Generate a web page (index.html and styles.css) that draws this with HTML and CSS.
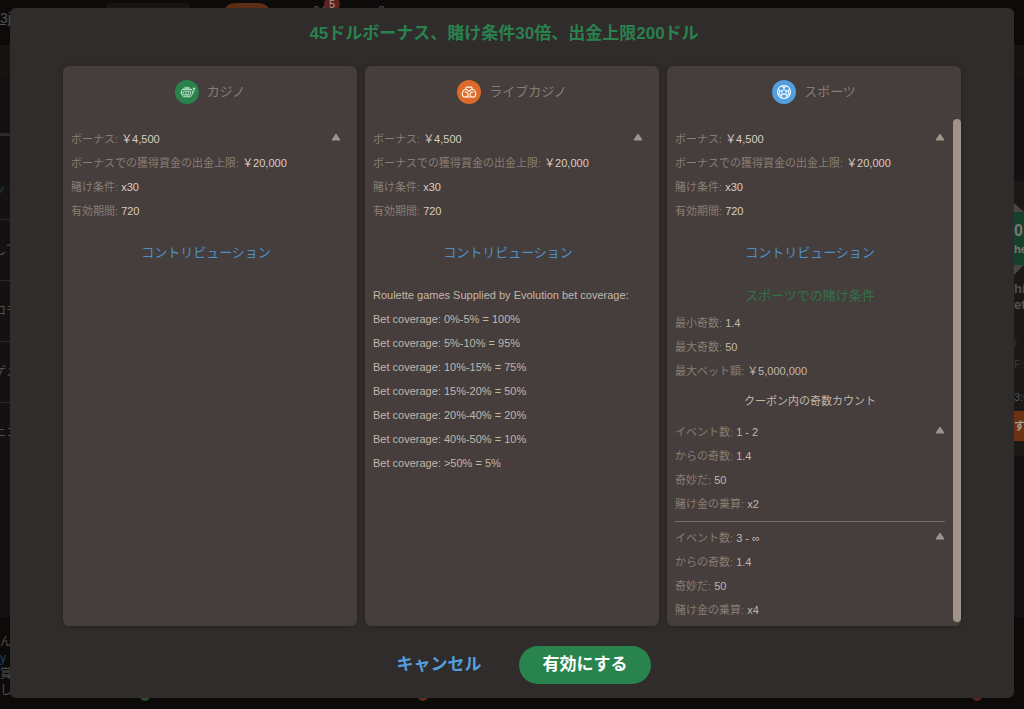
FILE: index.html
```html
<!DOCTYPE html>
<html lang="ja">
<head>
<meta charset="utf-8">
<meta name="viewport" content="width=device-width, initial-scale=1">
<title>ボーナス</title>
<link rel="stylesheet" href="styles.css">
</head>
<body>
<div class="page" aria-hidden="true">
  <div class="topbar">
    <span class="user">3j</span>
    <span class="balance"></span>
    <span class="deposit"></span>
    <span class="clock">04<span class="badge">5</span></span>
    <span class="lang">a</span>
  </div>
  <div class="band"></div>
  <div class="main">
    <ul class="side">
      <li class="current">ット</li>
      <li>して</li>
      <li>ロモ</li>
      <li>ゲメ</li>
      <li>ニコ</li>
    </ul>
    <div class="promo">
      <div class="promo-ribbon"><b>0</b><span>he</span></div>
      <div class="promo-name">hi<br>et</div>
      <div class="promo-line">i:</div>
      <div class="promo-line">F:</div>
      <div class="promo-time">3:0</div>
      <div class="promo-action">す</div>
    </div>
  </div>
  <div class="foot">
    <div class="foot-text">ん<br><span class="foot-link">y</span><br>賞<br>し</div>
    <div class="dots"><i class="dot dot-green"></i><i class="dot dot-orange"></i><i class="dot dot-red"></i></div>
  </div>
</div>

<div class="modal" role="dialog" aria-modal="true" aria-labelledby="title">
  <h1 class="title" id="title">45ドルボーナス、賭け条件30倍、出金上限200ドル</h1>

  <div class="cards">
    <section class="card">
      <h2 class="card-head">
        <svg class="icon icon-casino" viewBox="0 0 24 24" fill="none" stroke="currentColor" stroke-width="1" stroke-linecap="round" stroke-linejoin="round" aria-hidden="true">
          <path d="M8 9.500C8.500 8 10 7.200 12 7.200s3.500.8 4 2.300"/>
          <path d="M7.500 9.500h9l1 2-.3 3-1.700 2.300h-7L6.800 14.500l-.3-3z"/>
          <path d="M6.500 11.300c-.9.600-.9 2.700.3 3.200M17.500 13.500l1.500-2.300V9.500"/>
          <circle cx="19" cy="8.600" r=".8" fill="currentColor"/>
          <path d="M8.500 11.300h7v3.400h-7zM10.800 11.300v3.400M13.200 11.300v3.400M9.500 16h5M10 8.600h4" stroke-width=".9"/>
        </svg>
        カジノ
      </h2>
      <div class="card-scroll">
        <div class="card-body">
          <div class="block">
            <dl class="rows">
              <div><dt>ボーナス:</dt> <dd>￥4,500</dd></div>
              <div><dt>ボーナスでの獲得賞金の出金上限:</dt> <dd>￥20,000</dd></div>
              <div><dt>賭け条件:</dt> <dd>x30</dd></div>
              <div><dt>有効期間:</dt> <dd>720</dd></div>
            </dl>
            <button class="toggle" type="button" aria-label="折りたたむ"><svg viewBox="0 0 10 8"><path d="M5 1 9 7H1z"/></svg></button>
          </div>
          <button class="contribution" type="button">コントリビューション</button>
        </div>
      </div>
    </section>

    <section class="card">
      <h2 class="card-head">
        <svg class="icon icon-live" viewBox="0 0 24 24" fill="none" stroke="currentColor" stroke-width="1.200" stroke-linecap="round" stroke-linejoin="round" aria-hidden="true">
          <path d="M12 11.500 9.300 9.200C8 7.800 10 5.900 12 7.600c2-1.700 4 .2 2.700 1.600z"/>
          <path d="M8.700 9.300C6.500 10 5.300 12 5.300 14c0 1.900 1.300 3.100 2.900 3.100 1.700 0 2.800-1.200 2.800-2.600 0-1.500-1.300-2.500-2.800-2.300"/>
          <path d="M15.300 9.300c2.200.7 3.400 2.700 3.400 4.700 0 1.900-1.300 3.100-2.900 3.100-1.700 0-2.800-1.200-2.800-2.600 0-1.500 1.300-2.500 2.800-2.300"/>
          <path d="M10 16.800c1.300.5 2.700.5 4 0"/>
        </svg>
        ライブカジノ
      </h2>
      <div class="card-scroll">
        <div class="card-body">
          <div class="block">
            <dl class="rows">
              <div><dt>ボーナス:</dt> <dd>￥4,500</dd></div>
              <div><dt>ボーナスでの獲得賞金の出金上限:</dt> <dd>￥20,000</dd></div>
              <div><dt>賭け条件:</dt> <dd>x30</dd></div>
              <div><dt>有効期間:</dt> <dd>720</dd></div>
            </dl>
            <button class="toggle" type="button" aria-label="折りたたむ"><svg viewBox="0 0 10 8"><path d="M5 1 9 7H1z"/></svg></button>
          </div>
          <button class="contribution" type="button">コントリビューション</button>
          <ul class="coverage">
            <li>Roulette games Supplied by Evolution bet coverage:</li>
            <li>Bet coverage: 0%-5% = 100%</li>
            <li>Bet coverage: 5%-10% = 95%</li>
            <li>Bet coverage: 10%-15% = 75%</li>
            <li>Bet coverage: 15%-20% = 50%</li>
            <li>Bet coverage: 20%-40% = 20%</li>
            <li>Bet coverage: 40%-50% = 10%</li>
            <li>Bet coverage: &gt;50% = 5%</li>
          </ul>
        </div>
      </div>
    </section>

    <section class="card">
      <h2 class="card-head">
        <svg class="icon icon-sport" viewBox="0 0 24 24" fill="none" stroke="currentColor" stroke-width="1.100" aria-hidden="true">
          <circle cx="12" cy="12" r="6.500"/>
          <path d="m12 9.600 2.400 1.700-.9 2.800h-3l-.9-2.800z"/>
          <path d="M12 9.600V7.500M14.400 11.300l2-.7M13.500 14.100l1.300 1.800M10.500 14.100l-1.300 1.800M9.600 11.300l-2-.7M9.500 6.100 12 7.500l2.500-1.400M17.900 9.300l-1.500 1.300.4 3.200 1.300-.3M14 18.100l.8-2.200 2-2.100M10 18.100l-.8-2.200-2-2.100M6.100 9.300l1.500 1.300-.4 3.200-1.300-.3"/>
        </svg>
        スポーツ
      </h2>
      <div class="card-scroll">
        <div class="card-body">
          <div class="block">
            <dl class="rows">
              <div><dt>ボーナス:</dt> <dd>￥4,500</dd></div>
              <div><dt>ボーナスでの獲得賞金の出金上限:</dt> <dd>￥20,000</dd></div>
              <div><dt>賭け条件:</dt> <dd>x30</dd></div>
              <div><dt>有効期間:</dt> <dd>720</dd></div>
            </dl>
            <button class="toggle" type="button" aria-label="折りたたむ"><svg viewBox="0 0 10 8"><path d="M5 1 9 7H1z"/></svg></button>
          </div>
          <button class="contribution" type="button">コントリビューション</button>
          <h3 class="wager-title">スポーツでの賭け条件</h3>
          <dl class="rows rows-soft">
            <div><dt>最小奇数:</dt> <dd>1.4</dd></div>
            <div><dt>最大奇数:</dt> <dd>50</dd></div>
            <div><dt>最大ベット額:</dt> <dd>￥5,000,000</dd></div>
          </dl>
          <h4 class="coupon-title">クーポン内の奇数カウント</h4>
          <div class="block">
            <dl class="rows rows-soft">
              <div><dt>イベント数:</dt> <dd>1 - 2</dd></div>
              <div><dt>からの奇数:</dt> <dd>1.4</dd></div>
              <div><dt>奇妙だ:</dt> <dd>50</dd></div>
              <div><dt>賭け金の乗算:</dt> <dd>x2</dd></div>
            </dl>
            <button class="toggle" type="button" aria-label="折りたたむ"><svg viewBox="0 0 10 8"><path d="M5 1 9 7H1z"/></svg></button>
          </div>
          <hr class="rule">
          <div class="block">
            <dl class="rows rows-soft">
              <div><dt>イベント数:</dt> <dd>3 - ∞</dd></div>
              <div><dt>からの奇数:</dt> <dd>1.4</dd></div>
              <div><dt>奇妙だ:</dt> <dd>50</dd></div>
              <div><dt>賭け金の乗算:</dt> <dd>x4</dd></div>
            </dl>
            <button class="toggle" type="button" aria-label="折りたたむ"><svg viewBox="0 0 10 8"><path d="M5 1 9 7H1z"/></svg></button>
          </div>
        </div>
        <span class="scroll-thumb"></span>
      </div>
    </section>
  </div>

  <div class="actions">
    <button class="btn btn-cancel" type="button">キャンセル</button>
    <button class="btn btn-activate" type="button">有効にする</button>
  </div>
</div>
</body>
</html>
```

FILE: styles.css
```css
*, *::before, *::after { box-sizing: border-box; }

body {
  margin: 0;
  background: #0c0b0a;
  color: #887d73;
  font: 11px/24px "Liberation Sans", "Noto Sans CJK JP", sans-serif;
}

h1, h2, h3, h4, dl, dd, ul { margin: 0; padding: 0; font-weight: 400; }
ul { list-style: none; }

button {
  border: 0;
  padding: 0;
  background: none;
  color: inherit;
  font: inherit;
  cursor: pointer;
}

/* Dimmed page under the dialog */
.page {
  display: flex;
  flex-direction: column;
  height: 100vh;
  overflow: hidden;
  color: #57514c;
}

.topbar { display: flex; height: 45px; line-height: 16px; }
.user { width: 106px; padding-top: 10px; font-size: 14px; text-decoration: underline; }
.balance { width: 84px; margin: 3px 31px 0 0; border-radius: 3px; background: #18130f; }
.deposit { width: 52px; height: 30px; margin-top: 3px; border-radius: 15px; background: #5a2d14; }
.clock { position: relative; margin: 3px 0 0 40px; font-size: 12px; }
.badge {
  position: absolute;
  top: -7px;
  left: 11px;
  width: 16px;
  height: 16px;
  border-radius: 50%;
  background: #5e211f;
  color: #a39b96;
  font-size: 11px;
  line-height: 17px;
  text-align: center;
}
.lang { margin: 1px 0 0 52px; font-size: 12px; }

.band { height: 30px; background: #18130f; }

.main {
  display: flex;
  flex: 1;
  justify-content: space-between;
  background: #131112;
}

.side {
  width: 18px;
  height: 329px;
  margin-top: 58px;
  padding-top: 23px;
  border-top: 3px solid #2b2b27;
  overflow: hidden;
  font-size: 12px;
}
.side li {
  display: flex;
  justify-content: flex-end;
  height: 61px;
  border-bottom: 1px solid #2b2828;
  line-height: 60px;
  white-space: nowrap;
}
.side li:last-child { border-bottom: 0; }
.side .current { color: #124a2a; }

.promo {
  align-self: flex-start;
  width: 10px;
  height: 275px;
  margin-top: 106px;
  overflow: hidden;
  background: #1a1916;
  white-space: nowrap;
}
.promo-ribbon {
  display: flex;
  flex-direction: column;
  height: 72px;
  margin-top: 22px;
  padding-top: 19px;
  background: linear-gradient(#4b4541 9px, #16402a 9px 62px, #4b4541 62px);
  clip-path: polygon(0 0, 100% 9px, 100% 62px, 0 100%);
  color: #7d7771;
  font-weight: 700;
  line-height: 18px;
}
.promo-ribbon b { font-size: 16px; }
.promo-name { margin: 6px 0 18px; font-size: 13px; font-weight: 700; line-height: 16px; }
.promo-line { height: 22px; line-height: 22px; color: #393531; }
.promo-time { height: 36px; padding-top: 12px; line-height: 20px; }
.promo-action {
  height: 30px;
  background: #6b3213;
  color: #a39b96;
  font-weight: 700;
  line-height: 30px;
}

.foot {
  display: flex;
  flex-direction: column;
  justify-content: space-between;
  height: 92px;
  padding: 17px 0 8px;
}
.foot-text { height: 57px; font-size: 12px; line-height: 16px; }
.foot-link { color: #1d4261; }
.dots { display: grid; grid-template-columns: 150px 278px 554px; height: 10px; justify-items: end; }
.dot { width: 10px; height: 10px; border-radius: 50%; }
.dot-green { background: #264a2a; }
.dot-orange { background: #5e2d1f; }
.dot-red { background: #5e211f; }

/* Dialog */
.modal {
  position: fixed;
  inset: 8px 10px 11px;
  display: flex;
  flex-direction: column;
  padding: 14px 53px 14px;
  border-radius: 6px;
  background: #302c2b;
}

.title {
  margin-bottom: 20px;
  padding-right: 16px;
  color: #2a814d;
  font-size: 17px;
  font-weight: 700;
  line-height: 24px;
  text-align: center;
}

.cards {
  display: grid;
  grid-template-columns: repeat(3, minmax(0, 1fr));
  gap: 8px;
  flex: 1;
  min-height: 0;
}

.card {
  display: flex;
  flex-direction: column;
  min-height: 0;
  padding-bottom: 4px;
  border-radius: 6px;
  background: #453e3d;
  box-shadow: 0 0 5px rgba(0, 0, 0, .25);
}

.card-head {
  display: flex;
  align-items: center;
  justify-content: center;
  gap: 8px;
  padding: 14px 0;
  font-size: 13px;
  line-height: 24px;
}

.icon { width: 24px; height: 24px; border-radius: 50%; }
.icon-casino { background: #29834d; color: #b5dcc2; }
.icon-live { background: #dc6a2b; color: #fff0e4; }
.icon-sport { background: #539fde; color: #f0f8ff; }

.card-scroll { display: flex; flex: 1; min-height: 0; }
.card-body { flex: 1; padding: 9px 16px 0 8px; min-width: 0; overflow: hidden; }
.scroll-thumb { width: 8px; margin: 1px 0 0 -8px; border-radius: 4px; background: #a0938a; }

.block { display: flex; justify-content: space-between; align-items: flex-start; }

.rows dt, .rows dd { display: inline; }
.rows dd { color: #dacdc0; }
.rows-soft dd { color: #c3b6aa; }

.toggle { display: flex; width: 10px; padding: 6px 0; }
.toggle svg {
  width: 10px;
  height: 8px;
  fill: #a0938a;
  stroke: #a0938a;
  stroke-width: 1;
  stroke-linejoin: round;
}

.contribution {
  display: block;
  margin: 18px auto;
  color: #4f8fc7;
  font-size: 13px;
  line-height: 24px;
}

.coverage { color: #c3b6aa; }

.wager-title {
  margin: 19px 0 3px;
  color: #2f7449;
  font-size: 13px;
  text-align: center;
}

.coupon-title { margin: 6px 0 7px; color: #c3b6aa; font-size: 11px; text-align: center; }

.rule { height: 1px; margin: 5px 0 4px; border: 0; background: #776e69; }

.actions { display: flex; justify-content: center; gap: 14px; margin-top: 20px; }
.btn {
  height: 38px;
  min-width: 132px;
  padding: 0 23px;
  border-radius: 19px;
  font-size: 17px;
  font-weight: 700;
}
.btn-cancel { color: #539fde; }
.btn-activate { background: #29834d; color: #fff; }
```
